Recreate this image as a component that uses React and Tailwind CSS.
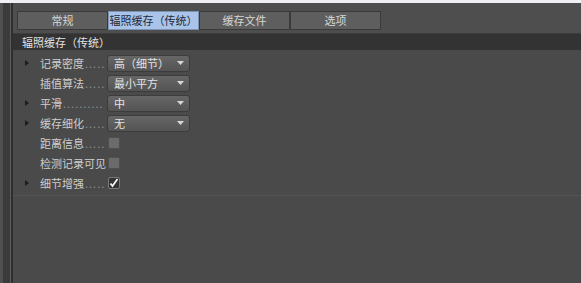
import React from 'react';

const tabs = ['常规', '辐照缓存（传统）', '缓存文件', '选项'];

const rows = [
    { label: '记录密度', arrow: true, type: 'select', value: '高（细节）' },
    { label: '插值算法', arrow: false, type: 'select', value: '最小平方' },
    { label: '平滑', arrow: true, type: 'select', value: '中' },
    { label: '缓存细化', arrow: true, type: 'select', value: '无' },
    { label: '距离信息', arrow: false, type: 'check', checked: false },
    { label: '检测记录可见', arrow: false, type: 'check', checked: false },
    { label: '细节增强', arrow: true, type: 'check', checked: true },
];

// dots fill the gap between label and control
const dots = (label) => '.'.repeat(Math.max(0, Math.floor((64 - label.length * 11) / 4)));

const Select = ({ value }) => (
    <div className="w-[83px] h-[17px] rounded-[3px] bg-gradient-to-b from-[#666666] to-[#545454] border border-[#3c3c3c] flex items-center pl-[6px] pr-[5px] text-[#e4e4e4]">
        <span className="flex-1 leading-none whitespace-nowrap">{value}</span>
        <svg width="7" height="4" viewBox="0 0 7 4"><path d="M0 0h7L3.5 4z" fill="#d8d8d8" /></svg>
    </div>
);

const Check = ({ checked }) => (
    <div className={`ml-[1px] w-[12px] h-[12px] rounded-[2px] border flex items-center justify-center ${checked ? 'bg-[#333333] border-[#7a7a7a]' : 'bg-[#6b6b6b] border-[#505050]'}`}>
        {checked && (
            <svg width="10" height="10" viewBox="0 0 10 10"><path d="M1.5 5.5l2 2.5L8.5 1" stroke="#f4f4f4" strokeWidth="1.8" fill="none" /></svg>
        )}
    </div>
);

export default function App() {
    return (
        <div className="w-[581px] h-[283px] bg-[#eef0f6] pt-[3px] flex flex-col overflow-hidden" style={{ fontFamily: '"Noto Sans CJK SC", "Noto Sans", sans-serif' }}>
            <div className="flex-1 flex min-h-0">
                <div className="w-[3px] bg-[#505050]" />
                <div className="w-[7px] bg-[#3b3b3b]" />
                <div className="w-[1px] bg-[#5c5c5c]" />
                <div className="w-[2px] bg-[#2f2f2f]" />
                <div className="flex-1 flex flex-col bg-[#4a4a4a] text-[11px]">
                    <div className="h-[30px] pt-[8px] pl-[4px] flex bg-[#4e4e4e]">
                        {tabs.map((t, i) => (
                            <div
                                key={t}
                                className={`w-[91px] h-[19px] flex items-center justify-center border ${i === 1 ? 'bg-[#a9c4e8] text-[#1e2a3a] border-[#7b93b5]' : 'bg-[#5e5e5e] text-[#d6d6d6] border-[#3a3a3a]'}`}
                            >
                                {t}
                            </div>
                        ))}
                    </div>
                    <div className="h-[17px] bg-[#333333] border-t border-[#3d3d3d] pl-[9px] flex items-center text-[#e2e2e2]">
                        辐照缓存（传统）
                    </div>
                    <div className="pt-[3px] pb-[2px] border-b border-[#555555]">
                        {rows.map((r) => (
                            <div key={r.label} className="h-[20px] flex items-center">
                                <div className="w-[27px] flex justify-end pr-[11px]">
                                    {r.arrow && (
                                        <svg width="4" height="6" viewBox="0 0 4 6"><path d="M0 0l4 3-4 3z" fill="#1c1c1c" /></svg>
                                    )}
                                </div>
                                <div className="w-[67px] flex items-center whitespace-nowrap text-[#cfcfcf]">
                                    <span>{r.label}</span>
                                    <span className="text-[#8a8a8a] tracking-[1px] ml-[1px]">{dots(r.label)}</span>
                                </div>
                                {r.type === 'select' ? <Select value={r.value} /> : <Check checked={r.checked} />}
                            </div>
                        ))}
                    </div>
                    <div className="flex-1" />
                </div>
            </div>
        </div>
    );
}
